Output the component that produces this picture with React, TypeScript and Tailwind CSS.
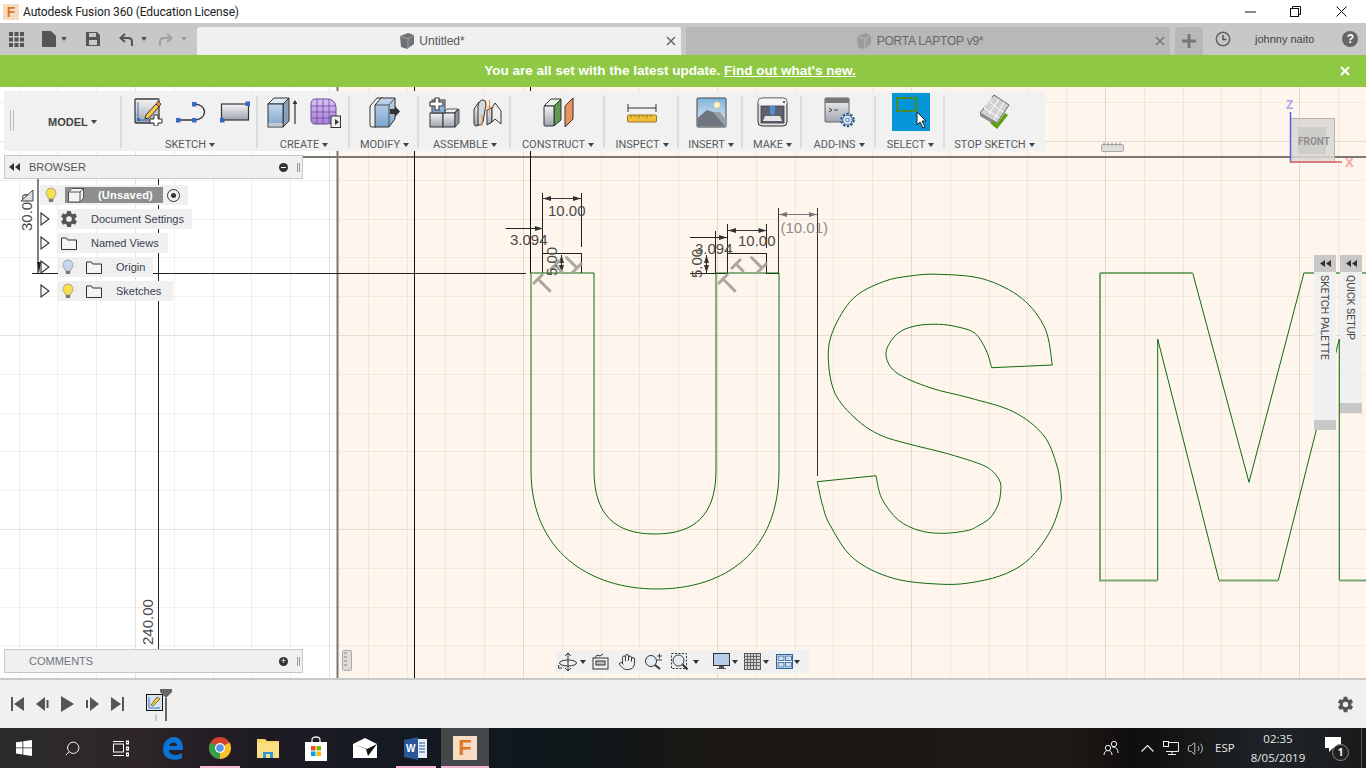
import { Hand, Search, Volume2 } from 'lucide-react'
import { IoSettingsSharp } from 'react-icons/io5'

const gridX = Array.from({ length: 36 }, (_, i) => i - 23)
const gridY = Array.from({ length: 17 }, (_, i) => i - 6)
const snap = (v: number) => Math.round(v) + 0.5

const sPoints: [number, number][] = [
    [991.7, 367.7], [986, 350], [975, 333.3], [958, 327], [938.3, 324.3], [915, 326], [896.7, 334.3], [886, 353.3], [896, 372.3],
    [930, 387.7], [970, 398], [1013.3, 411.7], [1043.3, 435], [1056.7, 465], [1061, 491.7], [1060, 505], [1050, 531.7], [1030, 558.3], [1006.7, 573.3],
    [976.7, 581.7], [943.3, 584.3], [893.3, 578.3], [853.3, 558.3], [830, 525], [822.5, 505], [817.3, 481.7],
]
const sPoints2: [number, number][] = [
    [876, 475.7], [881.7, 498.3], [898.3, 520], [920, 530.7], [943.3, 533.3], [966.7, 530.7], [976.7, 526.7], [990, 518], [998, 505], [1000.7, 491.7],
    [1000, 481.7], [993, 471.7], [980, 464], [945, 453], [910, 444.3], [880, 435], [856, 419], [835, 393.3], [828.3, 358.3], [833.3, 330],
    [853.3, 298.3], [883.3, 281.7], [910, 276], [938.3, 274.3], [983.3, 279], [1021.7, 298.3], [1045, 328.3], [1052.3, 365],
]

const smooth = (p: [number, number][]) => {
    let d = `M${p[0][0]} ${p[0][1]}`
    for (let i = 0; i < p.length - 1; i++) {
        const a = p[Math.max(i - 1, 0)]
        const b = p[i]
        const c = p[i + 1]
        const e = p[Math.min(i + 2, p.length - 1)]
        d += ` C${b[0] + (c[0] - a[0]) / 6} ${b[1] + (c[1] - a[1]) / 6} ${c[0] - (e[0] - b[0]) / 6} ${c[1] - (e[1] - b[1]) / 6} ${c[0]} ${c[1]}`
    }
    return d
}

const Caret = ({ className = 'border-t-[#444]' }: { className?: string }) => (
    <span className={`inline-block w-0 h-0 border-x-[3.5px] border-x-transparent border-t-[4px] ${className}`}></span>
)

const Gradients = () => (
    <svg className="absolute w-0 h-0">
        <defs>
            <linearGradient id="gBlue" x1="0" y1="0" x2="0" y2="1">
                <stop offset="0" stopColor="#c3d7ec" />
                <stop offset="1" stopColor="#7da3cd" />
            </linearGradient>
            <linearGradient id="gGray" x1="0" y1="0" x2="0" y2="1">
                <stop offset="0" stopColor="#f5f5f6" />
                <stop offset="1" stopColor="#9ea4ae" />
            </linearGradient>
            <linearGradient id="gPurple" x1="0" y1="0" x2="0" y2="1">
                <stop offset="0" stopColor="#d9c3f2" />
                <stop offset="1" stopColor="#a87fdc" />
            </linearGradient>
            <linearGradient id="gSky" x1="0" y1="0" x2="0" y2="1">
                <stop offset="0" stopColor="#7fb4de" />
                <stop offset="1" stopColor="#e8f0f5" />
            </linearGradient>
        </defs>
    </svg>
)

const SketchIcon = () => (
    <svg width="29" height="28" viewBox="0 0 29 28">
        <rect x="1" y="1" width="24" height="24" rx="1" fill="url(#gGray)" stroke="#3c3c3c" strokeWidth="1.3" />
        <path d="M4 4V22H22" fill="none" stroke="#3f6fc0" strokeWidth="1" />
        <rect x="3" y="20" width="3" height="3" fill="#3568c8" />
        <path d="M12 17l-1 4 4-1 10-11-3-3z" fill="#f6c945" stroke="#333" strokeWidth="1" />
        <path d="M22 6l2-3 3 3-2 3z" fill="#e8884a" stroke="#333" strokeWidth=".8" />
        <path d="M20 17h4v4h4v4h-4v3h-4v-3h-4v-4h4z" fill="#fff" stroke="#333" strokeWidth="1" />
    </svg>
)

const ArcIcon = () => (
    <svg width="32" height="24" viewBox="0 0 32 24">
        <path d="M3 20H19M19 4C33 4 33 20 19 20" fill="none" stroke="#3a3a3a" strokeWidth="1.4" />
        <rect x="1" y="18" width="4.5" height="4.5" fill="#3568c8" />
        <rect x="17" y="18" width="4.5" height="4.5" fill="#3568c8" />
        <rect x="17" y="2" width="4.5" height="4.5" fill="#3568c8" />
    </svg>
)

const RectIcon = () => (
    <svg width="32" height="24" viewBox="0 0 32 24">
        <rect x="2.5" y="4" width="27" height="16" fill="url(#gGray)" stroke="#333" strokeWidth="1.2" />
        <rect x="26.5" y="1.5" width="4.5" height="4.5" fill="#3568c8" />
        <rect x="1" y="18" width="4.5" height="4.5" fill="#3568c8" />
    </svg>
)

const ExtrudeIcon = () => (
    <svg width="30" height="31" viewBox="0 0 30 31">
        <path d="M1 7L7 1H22L16 7z" fill="#dfe9f3" stroke="#333" />
        <path d="M16 7L22 1V24L16 30z" fill="#8aa0b8" stroke="#333" />
        <rect x="1" y="7" width="15" height="23" fill="url(#gBlue)" stroke="#333" />
        <rect x="1.5" y="26" width="14" height="3.5" fill="#c4c8cc" />
        <path d="M28 4V27" stroke="#333" strokeWidth="1.2" />
        <path d="M25.5 7L28 3l2.5 4z" fill="#333" />
    </svg>
)

const MeshIcon = () => (
    <svg width="31" height="31" viewBox="0 0 31 31">
        <path d="M5 2H17Q25 2 26 10V19Q25 27 17 27H5Q1 27 1 22V8Q1 2 5 2z" fill="url(#gPurple)" stroke="#6a4a9a" />
        <path d="M1 9H25M1 15H26M1 21H25M7 2V27M13 2V27M19 2V27" stroke="#6a4a9a" strokeWidth=".8" />
        <rect x="21" y="19" width="9.5" height="11.5" fill="#eee" stroke="#333" />
        <path d="M22 25h3v-3l4 3-4 3v-3" fill="#333" />
    </svg>
)

const PressPullIcon = () => (
    <svg width="32" height="31" viewBox="0 0 32 31">
        <path d="M1 9L8 1H14L7 9V30H3Q1 30 1 28z" fill="#f2f2f2" stroke="#333" />
        <path d="M6 8L12 1H26V22L20 30H6z" fill="url(#gBlue)" stroke="#333" />
        <path d="M20 30V8H6M20 8L26 1" fill="none" stroke="#333" strokeWidth=".8" />
        <path d="M21 12h5V9l5 5.500-5 5.500v-3h-5z" fill="#333" />
    </svg>
)

const NewComponentIcon = () => (
    <svg width="31" height="31" viewBox="0 0 31 31">
        <rect x="1" y="16" width="13" height="14" fill="url(#gGray)" stroke="#333" />
        <path d="M14 16h11l4-4H18z" fill="#eceff2" stroke="#333" strokeWidth=".8" />
        <rect x="14" y="16" width="12" height="14" fill="url(#gGray)" stroke="#333" />
        <path d="M26 16l4-4V26l-4 4z" fill="#8f959e" stroke="#333" strokeWidth=".8" />
        <rect x="3" y="3" width="13" height="13" fill="url(#gBlue)" stroke="#333" />
        <path d="M6 1h4v4h4v4h-4v4H6V9H1V5h5z" fill="#fff" stroke="#333" strokeWidth="1.1" />
    </svg>
)

const JointIcon = () => (
    <svg width="29" height="29" viewBox="0 0 29 29">
        <path d="M1 11L6 4V27L3 28Q1 28 1 25z" fill="url(#gGray)" stroke="#333" />
        <path d="M5 8Q6 2 10 2Q13 2 13 6L10 24Q8 28 5 27z" fill="#d4d7db" stroke="#333" />
        <path d="M14 12L19 10V24L14 27z" fill="url(#gGray)" stroke="#333" />
        <path d="M19 10L22 5L28 13V26L22 21L19 24z" fill="#f0f0f0" stroke="#333" />
        <path d="M16.500 2V15M9 17V28" stroke="#e8842c" strokeWidth="1" />
        <path d="M12 9H21" stroke="#e8842c" strokeWidth=".8" />
    </svg>
)

const ConstructIcon = () => (
    <svg width="31" height="31" viewBox="0 0 31 31">
        <path d="M1 9L8 2H18L11 9z" fill="#eef0ee" stroke="#333" />
        <path d="M11 9L18 2V23L11 29z" fill="#5f9950" stroke="#333" />
        <rect x="1" y="9" width="10" height="20" rx="1" fill="url(#gGray)" stroke="#333" />
        <path d="M22 9L30 1V22L22 30z" fill="#e9935d" stroke="#333" />
    </svg>
)

const MeasureIcon = () => (
    <svg width="30" height="22" viewBox="0 0 30 22">
        <path d="M1 7H29" stroke="#333" />
        <path d="M1 3V11M29 3V11" stroke="#333" />
        <rect x="0.500" y="14" width="29" height="7" rx="1" fill="#f2bd3a" stroke="#9b7a20" />
        <path d="M4 14v3M8 14v2M12 14v3M16 14v2M20 14v3M24 14v2" stroke="#8c6d17" strokeWidth=".8" />
    </svg>
)

const PictureIcon = () => (
    <svg width="31" height="31" viewBox="0 0 31 31">
        <rect x="1" y="1" width="29" height="29" rx="1" fill="url(#gSky)" stroke="#444" />
        <circle cx="21" cy="8" r="3" fill="#fff7c8" stroke="#f1d98a" />
        <path d="M1.500 29.500V21L11 13L20 16L29.500 29.500z" fill="#6f7680" />
        <path d="M17 15L24 15L29.500 22V29.500z" fill="#98a0aa" />
    </svg>
)

const PrinterIcon = () => (
    <svg width="31" height="30" viewBox="0 0 31 30">
        <rect x="1" y="1" width="29" height="28" rx="4" fill="#dfdfdf" stroke="#333" />
        <rect x="1.500" y="1.500" width="28" height="7" rx="3" fill="#f4f4f4" />
        <rect x="4" y="9" width="23" height="17" fill="#5c636c" stroke="#333" strokeWidth=".7" />
        <rect x="26" y="4" width="2" height="2" fill="#0c8a2a" />
        <path d="M13 9h5v7l-2.500 3-2.500-3z" fill="#4d8ed8" />
        <path d="M6 24l2-5h15l2 5z" fill="#e6e6e6" />
    </svg>
)

const AddInsIcon = () => (
    <svg width="31" height="31" viewBox="0 0 31 31">
        <rect x="1" y="1" width="24" height="24" rx="1" fill="url(#gGray)" stroke="#666" />
        <rect x="1" y="1" width="24" height="5" fill="#777" />
        <path d="M5 11l3 2-3 2M10 13h4" fill="none" stroke="#333" strokeWidth=".9" />
        <circle cx="23.500" cy="23" r="6.200" fill="#f1f1f1" stroke="#28558f" strokeWidth="2" strokeDasharray="2.400 1.500" />
        <circle cx="23.500" cy="23" r="4.800" fill="#dbe7f5" stroke="#28558f" strokeWidth=".9" />
        <circle cx="23.500" cy="23" r="1.800" fill="#f1f1f1" stroke="#28558f" strokeWidth=".8" />
    </svg>
)

const StopSketchIcon = () => (
    <svg width="31" height="36" viewBox="0 0 31 36">
        <path d="M1 19L15 1L30 11L18 29z" fill="#cfd1d2" stroke="#666" />
        <path d="M5 14L20 24M10 7.500L24 18M13 3.500L5 14M20 5L10 20M25 8L15 26" stroke="#fff" strokeWidth="1" />
        <path d="M1 19L18 29V32L1 22z" fill="#8a8d90" />
        <path d="M14 27l4 3 8-11 3 2-11 14-7-6z" fill="#5d9f12" />
    </svg>
)

const SelectIcon = () => (
    <div className="w-[38px] h-[38px] bg-[#0696d7] relative">
        <div className="absolute left-[4px] top-[4px] w-[21px] h-[15px] border-2 border-[#4a8a2a]"></div>
        <svg className="absolute left-[24px] top-[18px]" width="12" height="18" viewBox="0 0 12 18">
            <path d="M1 1V14L4 11L7 17L9 16L6 10H10z" fill="#fff" stroke="#222" strokeWidth="1" />
        </svg>
    </div>
)

const Section = ({ label, width, children, last, row = 'gap-[13px]' }: { label: string; width: string; children: React.ReactNode; last?: boolean; row?: string }) => (
    <div className={`flex flex-col items-center relative ${width}`}>
        <div className={`h-[42px] flex items-center justify-center ${row}`}>{children}</div>
        <div className="flex items-center gap-[3px] text-[11px] leading-none text-[#5a5a5a] font-['Roboto',sans-serif] mt-[6px]">
            {label}
            <Caret />
        </div>
        {!last && <div className="absolute right-0 top-[5px] bottom-[3px] w-[2px] bg-[#dcdcdc]"></div>}
    </div>
)

const Toolbar = () => (
    <div className="absolute left-[4px] top-[4px] w-[1041px] h-[60px] bg-[#f1f1f1] flex">
        <div className="w-[118px] flex items-center relative">
            <div className="absolute left-[6px] top-[19px] w-[4px] h-[21px] border-x border-[#bbb]"></div>
            <div className="ml-[44px] mt-[2px] flex items-center gap-[3px] text-[11px] font-bold text-[#444]">
                MODEL
                <Caret />
            </div>
            <div className="absolute right-0 top-[5px] bottom-[3px] w-[2px] bg-[#dcdcdc]"></div>
        </div>
        <Section label="SKETCH" width="w-[136px]" row="gap-[12px] pl-[5px]"><SketchIcon /><ArcIcon /><RectIcon /></Section>
        <Section label="CREATE" width="w-[92px]"><ExtrudeIcon /><MeshIcon /></Section>
        <Section label="MODIFY" width="w-[69px]"><PressPullIcon /></Section>
        <Section label="ASSEMBLE" width="w-[92px]"><NewComponentIcon /><JointIcon /></Section>
        <Section label="CONSTRUCT" width="w-[94px]"><ConstructIcon /></Section>
        <Section label="INSPECT" width="w-[74px]"><MeasureIcon /></Section>
        <Section label="INSERT" width="w-[64px]"><PictureIcon /></Section>
        <Section label="MAKE" width="w-[59px]"><PrinterIcon /></Section>
        <Section label="ADD-INS" width="w-[74px]"><AddInsIcon /></Section>
        <Section label="SELECT" width="w-[69px]"><SelectIcon /></Section>
        <Section label="STOP SKETCH" width="w-[99px]" last><StopSketchIcon /></Section>
    </div>
)

const Bulb = ({ color = '#f7e04b' }: { color?: string }) => (
    <svg width="12" height="16" viewBox="0 0 12 16">
        <path d="M6 1a5 5 0 0 1 3 9l-.5 2h-5L3 10A5 5 0 0 1 6 1z" fill={color} stroke="#9a9a8a" strokeWidth=".8" />
        <rect x="3.700" y="12" width="4.600" height="3" rx="1" fill="#777" />
    </svg>
)

const Folder = () => (
    <svg width="16" height="13" viewBox="0 0 16 13">
        <path d="M.5 12.500V1h5l1 2h9v9.500z" fill="#f3f4f6" stroke="#333" />
    </svg>
)

const Expander = () => (
    <svg width="10" height="14" viewBox="0 0 10 14" className="shrink-0">
        <path d="M1 1L9 7L1 13z" fill="#fafafa" stroke="#333" strokeWidth="1.100" />
    </svg>
)

const TreeRow = ({ children, width }: { children: React.ReactNode; width: string }) => (
    <div className="flex items-center h-[20px] gap-[8px]">
        <Expander />
        <div className={`h-[20px] bg-[#f0f0f0] flex items-center text-[11px] text-[#3b4250] ${width}`}>{children}</div>
    </div>
)

const Browser = () => (
    <>
        <div className="absolute left-[4px] top-[68px] w-[299px] h-[24px] bg-[#f0f0f0] border border-[#c8c8c8] flex items-center text-[12px] text-[#555]">
            <svg width="12" height="8" viewBox="0 0 12 8" className="ml-[4px]"><path d="M5 0V8L0 4zM11 0V8L6 4z" fill="#333" /></svg>
            <span className="ml-[8px] text-[11px]">BROWSER</span>
            <div className="ml-auto mr-[9px] w-[9px] h-[9px] rounded-full bg-[#333] flex items-center justify-center"><div className="w-[5px] h-[1px] bg-white"></div></div>
            <div className="mr-[2px] w-[3px] h-[9px] border-x border-[#999]"></div>
        </div>
        <div className="absolute left-[40px] top-[98px] flex flex-col gap-[4px]">
            <div className="w-[148px] h-[20px] bg-[#f0f0f0] flex items-center pl-[5px]">
                <Bulb />
                <div className="ml-[8px] w-[98px] h-[16px] bg-[#8e8e8e] flex items-center pl-[3px]">
                    <svg width="16" height="15" viewBox="0 0 16 15"><path d="M.5 14V4L4 .5H15.500V10L12 14z" fill="#f2f2f2" stroke="#555" /><path d="M.5 4H12V14M12 4L15.500 .5" fill="none" stroke="#555" /></svg>
                    <span className="ml-[14px] text-[11px] font-bold text-white tracking-[0.2px]">(Unsaved)</span>
                </div>
                <div className="ml-[4px] w-[13px] h-[13px] rounded-full border border-[#333] flex items-center justify-center"><div className="w-[5px] h-[5px] rounded-full bg-[#333]"></div></div>
            </div>
            <TreeRow width="w-[134px]">
                <IoSettingsSharp className="ml-[2px] text-[#555]" size={18} />
                <span className="ml-[13px]">Document Settings</span>
            </TreeRow>
            <TreeRow width="w-[110px]">
                <span className="ml-[3px] flex"><Folder /></span>
                <span className="ml-[14px]">Named Views</span>
            </TreeRow>
            <TreeRow width="w-[95px]">
                <span className="ml-[4px] flex"><Bulb color="#c4d4f2" /></span>
                <span className="ml-[12px] flex"><Folder /></span>
                <span className="ml-[14px]">Origin</span>
            </TreeRow>
            <TreeRow width="w-[115px]">
                <span className="ml-[4px] flex"><Bulb /></span>
                <span className="ml-[12px] flex"><Folder /></span>
                <span className="ml-[14px]">Sketches</span>
            </TreeRow>
        </div>
        <div className="absolute left-[4px] top-[562px] w-[299px] h-[24px] bg-[#f0f0f0] border border-[#c8c8c8] flex items-center text-[11px] text-[#6f7680]">
            <span className="ml-[24px]">COMMENTS</span>
            <div className="ml-auto mr-[9px] w-[9px] h-[9px] rounded-full bg-[#333] flex items-center justify-center text-white text-[9px] leading-none">+</div>
            <div className="mr-[2px] w-[3px] h-[9px] border-x border-[#999]"></div>
        </div>
    </>
)

const PerpGlyph = ({ x, y, r = -45, len = 18 }: { x: number; y: number; r?: number; len?: number }) => (
    <g transform={`translate(${x} ${y}) rotate(${r})`} stroke="#aaa6a0" strokeWidth="3" fill="none">
        <path d={`M-7 0H7M0 0V${len}`} />
    </g>
)

const Arrow = ({ x, y, dir }: { x: number; y: number; dir: 'l' | 'r' | 'u' | 'd' }) => {
    const d = { l: `M${x} ${y}l8 -2.500v5z`, r: `M${x} ${y}l-8 -2.500v5z`, u: `M${x} ${y}l-2.500 8h5z`, d: `M${x} ${y}l-2.500 -8h5z` }[dir]
    return <path d={d} fill="#333" />
}

const dimText = { fontSize: 15, fill: '#4a4a4a' }

const SketchCanvas = () => (
    <svg className="absolute inset-0" width="1366" height="591" viewBox="0 87 1366 591">
        <rect x="0" y="87" width="337" height="591" fill="#fff" />
        <rect x="337" y="87" width="1029" height="591" fill="#fef6ec" />
        {gridX.map((k) => (
            <line key={k} x1={snap(911 + k * 38.8)} y1="87" x2={snap(911 + k * 38.8)} y2="678" stroke="#6b5a40" strokeOpacity={k % 5 === 0 ? 0.18 : 0.09} />
        ))}
        {gridY.map((k) => (
            <line key={k} x1="0" y1={snap(335 + k * 38.8)} x2="1366" y2={snap(335 + k * 38.8)} stroke="#6b5a40" strokeOpacity={k % 5 === 0 ? 0.16 : 0.08} />
        ))}
        <path d="M337.500 87V678" stroke="#7b7770" strokeWidth="2" />
        <path d="M303 157H1366" stroke="#7d7870" strokeWidth="2" />
        <path d="M414.500 87V678M530.500 87V273" stroke="#111" strokeWidth="1" />
        <path d="M158.500 179V650" stroke="#222" strokeWidth="1" />
        <path d="M38 179V273" stroke="#555" strokeWidth="1.500" />
        <path d="M32 273.500H526M690 273.500H728M766 273.500H779" stroke="#222" strokeWidth="1" />

        <path d="M542.500 193V273M581.500 193V247M581.500 253V273M542.500 253.500H581.500M505.500 228.500H542.500" stroke="#222" fill="none" />
        <path d="M542.500 198.500H581.500" stroke="#333" />
        <Arrow x={543} y={198.500} dir="l" /><Arrow x={581} y={198.500} dir="r" />
        <Arrow x={543} y={228.500} dir="r" />
        <path d="M561.500 255V273" stroke="#222" />
        <Arrow x={561.500} y={255} dir="u" /><Arrow x={561.500} y={273} dir="d" />
        <path d="M715.500 231V273M727.500 224V273M766.500 224V248M766.500 253V273M727.500 253.500H766.500M690 237.500H727.500" stroke="#222" fill="none" />
        <path d="M727.500 230.500H766.500" stroke="#333" />
        <Arrow x={728} y={230.500} dir="l" /><Arrow x={766.500} y={230.500} dir="r" />
        <Arrow x={727} y={237.500} dir="r" />
        <path d="M706.500 255V273" stroke="#222" />
        <Arrow x={706.500} y={255} dir="u" /><Arrow x={706.500} y={273} dir="d" />
        <path d="M778.500 208V273M817.500 208V476" stroke="#333" />
        <path d="M779 214.500H817" stroke="#777" />
        <path d="M779 214.500l8 -2.500v5zM817 214.500l-8 -2.500v5z" fill="#777" />

        <path d="M531 273V470C531 552 590 589 657 589C725 589 779 552 779 470V273H716V470C716 515 695 534 655 534C615 534 594 515 594 470V273H531" fill="none" stroke="#0e6a0e" strokeWidth="1" />
        <path d={smooth(sPoints)} fill="none" stroke="#0e6a0e" strokeWidth="1" />
        <path d={smooth(sPoints2)} fill="none" stroke="#0e6a0e" strokeWidth="1" />
        <path d="M991.700 367.700L1052.300 365M817.300 481.700L876 475.700" fill="none" stroke="#0e6a0e" strokeWidth="1" />
        <path d="M1157.700 580.300V339L1219 580.300M1278.300 580.300L1339.300 339V580.300M1192.700 273L1249 482.300L1304 272.700" fill="none" stroke="#0e6a0e" strokeWidth="1" />
        <path d="M1100 273V580.500H1157.700M1100 273H1192.700M1219 580.500H1278.300M1339.300 580.500H1366M1304 273H1366" fill="none" stroke="#7aa873" strokeWidth="2" />

        <PerpGlyph x={538} y={279} /><PerpGlyph x={723} y={279} />
        <PerpGlyph x={577} y={268} r={135} len={16} /><PerpGlyph x={762} y={268} r={135} len={16} />
        <PerpGlyph x={736} y={264} len={11} />
        <PerpGlyph x={555} y={265} len={11} />

        <text x="548" y="216" {...dimText}>10.00</text>
        <text x="510" y="245" {...dimText}>3.094</text>
        <text x="738" y="246" {...dimText}>10.00</text>
        <text x="695" y="254" {...dimText}>3.094</text>
        <text x="780.500" y="233" fontSize="15" fill="#8c8c8c">(10.01)</text>
        <text transform="translate(557 276) rotate(-90)" {...dimText}>5.00</text>
        <text transform="translate(702 278) rotate(-90)" {...dimText}>5.00</text>
        <text transform="translate(32 231) rotate(-90)" {...dimText}>30.00</text>
        <text transform="translate(153 645) rotate(-90)" {...dimText}>240.00</text>
        <path d="M21 201L33 190V201z" fill="#ddd" stroke="#444" />
        <path d="M37 262L41 262L39 273z" fill="#222" />

        <g fill="#dedcd6" stroke="#aaa">
            <rect x="1101.500" y="144.500" width="22" height="7" rx="1" />
            <rect x="342.500" y="650.500" width="9" height="20" rx="1" />
        </g>
        <path d="M1104 142.500v3M1108 142.500v3M1112 142.500v3M1116 142.500v3M1120 142.500v3M344 653h3M344 657h3M344 661h3M344 665h3" stroke="#888" />

        <rect x="1290.500" y="118.500" width="44" height="44" fill="#d9d7d3" fillOpacity="0.85" stroke="#b5b3af" />
        <rect x="1298" y="127" width="28" height="27" fill="#cfcdc9" />
        <path d="M1290.500 112V162" stroke="#5a5af0" strokeWidth="1.500" />
        <path d="M1290 162H1342" stroke="#e06060" strokeWidth="1.500" />
        <text x="1286" y="109" fontSize="12" fontWeight="bold" fill="#a5a5ef">Z</text>
        <text x="1345" y="167" fontSize="13" fontWeight="bold" fill="#f2a5a5">X</text>
        <text x="1298" y="145" fontSize="10" fontWeight="bold" fontFamily="Roboto" fill="#8f8f8f">FRONT</text>
    </svg>
)

const Palette = ({ label, left, height }: { label: string; left: string; height: string }) => (
    <div className={`absolute top-[168px] w-[22px] flex flex-col bg-[#f0f0f0] ${left} ${height}`}>
        <div className="h-[17px] bg-[#c8c8c8] flex items-center justify-center shrink-0">
            <svg width="11" height="7" viewBox="0 0 11 7"><path d="M5 0V7L0 3.500zM11 0V7L6 3.500z" fill="#333" /></svg>
        </div>
        <div className="flex-1 flex justify-center pt-[3px] pr-[2px]">
            <span className="[writing-mode:vertical-rl] text-[10.5px] leading-[12px] text-[#444] font-['Roboto',sans-serif]">{label}</span>
        </div>
        <div className="h-[10px] bg-[#c8c8c8] shrink-0"></div>
    </div>
)

const SmallCaret = () => <Caret className="border-t-[#333]" />

const NavBar = () => (
    <div className="absolute left-[556px] top-[563px] w-[253px] h-[23px] bg-[#f0f0f0] flex items-center pl-[2px]">
        <svg width="20" height="20" viewBox="0 0 20 20" fill="none" stroke="#333">
            <path d="M10 1V19M7 4l3-3 3 3M7 16l3 3 3-3" />
            <ellipse cx="10" cy="11" rx="8.500" ry="3" />
            <path d="M1 13l-1 3 4 0" />
        </svg>
        <span className="ml-[2px] flex"><SmallCaret /></span>
        <svg className="ml-[6px]" width="17" height="17" viewBox="0 0 17 17" fill="none" stroke="#333">
            <rect x="1" y="5" width="15" height="11" />
            <rect x="4" y="8" width="9" height="4" fill="#bbb" />
            <path d="M3 5l2-3 3 1 3-2" />
        </svg>
        <Hand className="ml-[9px] text-[#333]" size={18} strokeWidth={1.300} />
        <svg className="ml-[8px]" width="19" height="17" viewBox="0 0 19 17" fill="none" stroke="#333">
            <circle cx="7" cy="8" r="5.500" fill="#e6eef5" />
            <path d="M11 12l5 4" strokeWidth="2" />
            <path d="M13 3h5M15.500 .5v5M13 7h5" strokeWidth=".9" />
        </svg>
        <svg className="ml-[8px]" width="18" height="18" viewBox="0 0 18 18" fill="none" stroke="#333">
            <rect x=".5" y=".5" width="15" height="15" strokeDasharray="2 1.500" />
            <circle cx="7.500" cy="7.500" r="5.500" fill="#e6eef5" />
            <path d="M11.500 11.500l5 5" strokeWidth="2" />
        </svg>
        <span className="ml-[4px] flex"><SmallCaret /></span>
        <svg className="ml-[14px]" width="17" height="17" viewBox="0 0 17 17">
            <rect x=".5" y=".5" width="16" height="12" fill="#b4cdea" stroke="#333" />
            <path d="M6 13h5v2h2v1H4v-1h2z" fill="#555" />
        </svg>
        <span className="ml-[2px] flex"><SmallCaret /></span>
        <svg className="ml-[6px]" width="17" height="17" viewBox="0 0 17 17">
            <rect x=".5" y=".5" width="16" height="16" fill="#d4d4d4" stroke="#555" />
            <path d="M3.500 0v17M6.500 0v17M9.500 0v17M12.500 0v17M0 3.500h17M0 6.500h17M0 9.500h17M0 12.500h17" stroke="#666" />
        </svg>
        <span className="ml-[2px] flex"><SmallCaret /></span>
        <svg className="ml-[7px]" width="17" height="15" viewBox="0 0 17 15">
            <rect x=".5" y=".5" width="16" height="14" fill="#fff" stroke="#2f5f9f" />
            <rect x="2" y="2" width="6" height="4.500" fill="#d0dff0" stroke="#2f5f9f" strokeWidth=".8" />
            <rect x="9.500" y="2" width="6" height="4.500" fill="#d0dff0" stroke="#2f5f9f" strokeWidth=".8" />
            <rect x="2" y="8.500" width="6" height="4.500" fill="#d0dff0" stroke="#2f5f9f" strokeWidth=".8" />
            <rect x="9.500" y="8.500" width="6" height="4.500" fill="#d0dff0" stroke="#2f5f9f" strokeWidth=".8" />
        </svg>
        <span className="ml-[1px] flex"><SmallCaret /></span>
    </div>
)

const TitleBar = () => (
    <div className="h-[23px] bg-white flex items-center shrink-0">
        <div className="ml-[3px] w-[16px] h-[16px] bg-[#f6dcc4] flex items-center justify-center text-[#d97a1e] font-bold text-[14px] leading-none">F</div>
        <span className="ml-[4px] text-[12px] tracking-[-0.13px] text-[#222] font-['Roboto',sans-serif]">Autodesk Fusion 360 (Education License)</span>
        <svg className="ml-auto mr-[34px]" width="11" height="2" viewBox="0 0 11 2"><path d="M0 1H11" stroke="#111" /></svg>
        <svg className="mr-[35px]" width="11" height="11" viewBox="0 0 11 11" fill="none" stroke="#111"><rect x=".5" y="2.500" width="8" height="8" fill="#fff" /><path d="M2.500 2.500V.5H10.500V8.500H8.500" /></svg>
        <svg className="mr-[19px]" width="11" height="11" viewBox="0 0 11 11" stroke="#111"><path d="M.5 .5L10.500 10.500M10.500 .5L.5 10.500" /></svg>
    </div>
)

const TabCube = ({ color }: { color: string }) => (
    <svg width="16" height="16" viewBox="0 0 16 16">
        <path d="M1 3L9 0L15 2V11L8 16L2 14z" fill={color} />
        <path d="M1 3L9 6L15 2M9 6V15.500" fill="none" stroke="#eee" strokeOpacity=".4" />
    </svg>
)

const TabBar = () => (
    <div className="h-[32px] bg-[#c8c8c8] flex items-end shrink-0">
        <div className="w-[197px] h-[32px] flex items-center pl-[9px] relative">
            <svg width="15" height="15" viewBox="0 0 15 15" fill="#555">
                <rect width="4" height="4" /><rect x="5.500" width="4" height="4" /><rect x="11" width="4" height="4" />
                <rect y="5.500" width="4" height="4" /><rect x="5.500" y="5.500" width="4" height="4" /><rect x="11" y="5.500" width="4" height="4" />
                <rect y="11" width="4" height="4" /><rect x="5.500" y="11" width="4" height="4" /><rect x="11" y="11" width="4" height="4" />
            </svg>
            <svg className="ml-[18px]" width="14" height="16" viewBox="0 0 14 16" fill="#555"><path d="M0 0H9L14 5V16H0z" /></svg>
            <span className="ml-[5px] flex"><Caret className="border-t-[#555]" /></span>
            <svg className="ml-[19px]" width="14" height="14" viewBox="0 0 14 14" fill="#555"><path d="M0 0H11L14 3V14H0z" /><rect x="3" y="1" width="7" height="4" fill="#c8c8c8" /><rect x="3" y="8" width="8" height="5" fill="#c8c8c8" /></svg>
            <svg className="ml-[19px]" width="14" height="13" viewBox="0 0 14 13" fill="none" stroke="#555" strokeWidth="2"><path d="M6 1L1.500 5L6 9M2 5H9Q13 5 13 9V13" /></svg>
            <span className="ml-[8px] flex"><Caret className="border-t-[#555]" /></span>
            <svg className="ml-[12px]" width="14" height="13" viewBox="0 0 14 13" fill="none" stroke="#a0a0a0" strokeWidth="2"><path d="M8 1L12.500 5L8 9M12 5H5Q1 5 1 9V13" /></svg>
            <span className="ml-[8px] flex"><Caret className="border-t-[#a0a0a0]" /></span>
        </div>
        <div className="w-[484px] h-[28px] bg-[#f0f0f0] rounded-t-[3px] flex items-center justify-center relative">
            <div className="flex items-center gap-[4px] mr-[14px] text-[12px] text-[#555]">
                <TabCube color="#6f7274" />
                Untitled*
            </div>
            <svg className="absolute right-[5px] top-[9px]" width="10" height="10" viewBox="0 0 10 10" stroke="#666" strokeWidth="1.500"><path d="M1 1L9 9M9 1L1 9" /></svg>
        </div>
        <div className="ml-[5px] w-[484px] h-[28px] bg-[#b8b8b8] rounded-t-[3px] flex items-center justify-center relative">
            <div className="flex items-center gap-[5px] mr-[17px] text-[12px] tracking-[-0.25px] text-[#666]">
                <TabCube color="#999b9c" />
                PORTA LAPTOP v9*
            </div>
            <svg className="absolute right-[5px] top-[9px]" width="10" height="10" viewBox="0 0 10 10" stroke="#777" strokeWidth="1.500"><path d="M1 1L9 9M9 1L1 9" /></svg>
        </div>
        <div className="ml-[5px] w-[28px] h-[28px] bg-[#b8b8b8] rounded-t-[3px] flex items-center justify-center">
            <svg width="14" height="14" viewBox="0 0 14 14" fill="#777"><path d="M5.500 0h3v5.500H14v3H8.500V14h-3V8.500H0v-3h5.500z" /></svg>
        </div>
        <div className="h-[32px] flex-1 flex items-center relative">
            <svg className="ml-[12px]" width="16" height="16" viewBox="0 0 16 16"><circle cx="8" cy="8" r="7.500" fill="#666" /><circle cx="8" cy="8" r="5.500" fill="#c8c8c8" stroke="#fff" strokeOpacity=".4" /><path d="M8 4V8.500H11.500" stroke="#555" strokeWidth="1.500" fill="none" /></svg>
            <span className="ml-[24px] text-[11px] text-[#444]">johnny naito</span>
            <div className="ml-[28px] w-[16px] h-[16px] rounded-full bg-[#666] text-white text-[12px] font-bold leading-[16px] text-center">?</div>
        </div>
    </div>
)

const Banner = () => (
    <div className="h-[32px] bg-[#8fc843] flex items-center justify-center pr-[26px] relative shrink-0 text-white text-[13.5px] font-bold">
        <span>You are all set with the latest update.&nbsp;</span>
        <span className="underline">Find out what&apos;s new.</span>
        <svg className="absolute right-[16px] top-[11px]" width="10" height="10" viewBox="0 0 10 10" stroke="#fff" strokeWidth="2"><path d="M1 1L9 9M9 1L1 9" /></svg>
    </div>
)

const Timeline = () => (
    <div className="h-[50px] bg-[#f0f0f0] border-t-2 border-[#c9c9c9] shrink-0 flex items-center relative">
        <div className="flex items-center ml-[11px] gap-[12px]">
            <svg width="13" height="14" viewBox="0 0 13 14" fill="#555"><rect width="2" height="14" /><path d="M13 0V14L3 7z" /></svg>
            <svg width="13" height="14" viewBox="0 0 13 14" fill="#555"><path d="M9 0V14L0 7z" /><rect x="10.500" y="3" width="2" height="8" /></svg>
            <svg width="13" height="16" viewBox="0 0 13 16" fill="#555"><path d="M0 0V16L13 8z" /></svg>
            <svg width="13" height="14" viewBox="0 0 13 14" fill="#555"><rect y="3" width="2" height="8" /><path d="M4 0V14L13 7z" /></svg>
            <svg width="13" height="14" viewBox="0 0 13 14" fill="#555"><path d="M0 0V14L10 7z" /><rect x="11" width="2" height="14" /></svg>
        </div>
        <svg className="ml-[22px] mb-[4px]" width="17" height="17" viewBox="0 0 17 17">
            <rect x=".5" y=".5" width="16" height="16" fill="#d6e4f2" stroke="#111" />
            <path d="M3 3V14H14" fill="none" stroke="#3a6fc0" />
            <path d="M5 11l6-8 3 2-7 7z" fill="#f5c93c" stroke="#444" strokeWidth=".7" />
        </svg>
        <div className="absolute left-[155px] top-[34px] w-[2px] h-[7px] bg-[#ccc]"></div>
        <div className="absolute left-[160px] top-[9px] flex flex-col items-center">
            <svg width="12" height="9" viewBox="0 0 12 9" fill="#666"><path d="M0 0H12V3L6 9L0 3z" /></svg>
            <div className="w-[2px] h-[23px] bg-[#666]"></div>
        </div>
        <IoSettingsSharp className="ml-auto mr-[12px] text-[#555]" size={17} />
    </div>
)

const Taskbar = () => (
    <div className="h-[40px] shrink-0 flex items-center relative bg-[linear-gradient(90deg,#2b2b2d_0%,#2e2628_10%,#221c24_16%,#141a22_30%,#0f171b_42%,#1a1712_52%,#1d1915_78%,#100e0e_83%,#1f2428_93%,#1a1a1c_100%)]">
        <div className="w-[48px] flex justify-center">
            <svg width="16" height="16" viewBox="0 0 16 16" fill="#fff"><path d="M0 2.300L6.500 1.400V7.500H0zM7.300 1.300L16 0V7.500H7.300zM0 8.300H6.500V14.500L0 13.600zM7.300 8.300H16V16L7.300 14.700z" /></svg>
        </div>
        <div className="w-[48px] flex justify-center"><Search className="text-white -scale-x-100" size={17} strokeWidth={1.300} /></div>
        <div className="w-[48px] flex justify-center">
            <svg width="17" height="17" viewBox="0 0 17 17" fill="none" stroke="#fff"><rect x="1.500" y="4" width="10" height="8" /><path d="M1 1.500H12M1 15.500H12" /><rect x="14.500" y="1" width="2" height="3" /><rect x="14.500" y="7" width="2" height="3" /><rect x="14.500" y="13" width="2" height="3" /></svg>
        </div>
        <div className="ml-[4px] w-[48px] flex justify-center">
            <svg width="21" height="23" viewBox="0 0 21 23">
                <path d="M1 13C1 5 6 0 12 0C18 0 21 5 21 13H7C7 18 14 20 20 16V21C12 25 1 22 1 13zM7 9H15C15 5 9 4 7 9z" fill="#0b74d6" />
            </svg>
        </div>
        <div className="w-[48px] flex justify-center">
            <svg width="22" height="22" viewBox="0 0 22 22">
                <circle cx="11" cy="11" r="11" fill="#d6402f" />
                <path d="M11 11L1.500 5.500A11 11 0 0 0 11 22z" fill="#35a04a" />
                <path d="M11 11V22A11 11 0 0 0 20.500 5.500z" fill="#f6c42c" />
                <circle cx="11" cy="11" r="5" fill="#fff" />
                <circle cx="11" cy="11" r="3.800" fill="#5a90e8" />
            </svg>
        </div>
        <div className="w-[48px] flex justify-center">
            <svg width="22" height="20" viewBox="0 0 22 20">
                <path d="M0 1H8L10 3H22V20H0z" fill="#f6d46a" />
                <rect y="5" width="22" height="15" fill="#f9de82" />
                <path d="M6 20V14H16V20H13V16H9V20z" fill="#2a9ad8" />
            </svg>
        </div>
        <div className="w-[48px] flex justify-center">
            <svg width="22" height="25" viewBox="0 0 22 25">
                <path d="M7 8V4Q7 1 11 1Q15 1 15 4V8" fill="none" stroke="#eee" strokeWidth="1.300" />
                <rect y="6" width="22" height="19" fill="#fff" />
                <rect x="6" y="10" width="4.500" height="4.500" fill="#f05022" />
                <rect x="11.500" y="10" width="4.500" height="4.500" fill="#7fba00" />
                <rect x="6" y="15.500" width="4.500" height="4.500" fill="#00a4ef" />
                <rect x="11.500" y="15.500" width="4.500" height="4.500" fill="#ffb900" />
            </svg>
        </div>
        <div className="w-[50px] flex justify-center">
            <svg width="24" height="20" viewBox="0 0 24 20">
                <path d="M0 6L12 0L24 6V20H0z" fill="#fff" />
                <path d="M0 6L14 11L24 6L15 18L13 11z" fill="#111" />
            </svg>
        </div>
        <div className="w-[51px] flex justify-center">
            <svg width="23" height="23" viewBox="0 0 23 23">
                <rect x="6" y="2" width="17" height="19" fill="#e8eef8" />
                <path d="M15 6h6M15 9h6M15 12h6M15 15h6" stroke="#2b579a" />
                <path d="M0 3L14 0V23L0 20z" fill="#2b579a" />
                <text x="2" y="15" fontSize="10" fontWeight="bold" fill="#fff">W</text>
            </svg>
        </div>
        <div className="w-[48px] h-[40px] bg-[#44484a] flex justify-center items-center">
            <div className="w-[24px] h-[24px] bg-[#f6dcc4] flex items-center justify-center text-[#d97a1e] font-bold text-[22px] leading-none">F</div>
        </div>
        <div className="absolute left-[200px] bottom-0 w-[40px] h-[2px] bg-[#f5b5d5]"></div>
        <div className="absolute left-[396px] bottom-0 w-[40px] h-[2px] bg-[#f5b5d5]"></div>
        <div className="absolute left-[441px] bottom-0 w-[48px] h-[2px] bg-[#f5b5d5]"></div>

        <div className="ml-auto flex items-center text-[#e6e6e6] text-[11.5px] font-['Open_Sans',sans-serif]">
            <svg width="16" height="16" viewBox="0 0 16 16" fill="none" stroke="#eee"><circle cx="11" cy="4" r="2.700" /><circle cx="5" cy="8" r="2.700" /><path d="M1 15c0-6 8-6 8 0M9 7c3 0 6 1 6 6" /></svg>
            <svg className="ml-[22px]" width="13" height="8" viewBox="0 0 13 8" fill="none" stroke="#eee" strokeWidth="1.200"><path d="M.5 7.500L6.500 1.500L12.500 7.500" /></svg>
            <svg className="ml-[9px]" width="16" height="14" viewBox="0 0 16 14" fill="none" stroke="#eee"><path d="M3 1.500H15.500V10.500H3M9 10.500V13M5 13.500H13" /><rect x=".5" y=".5" width="5" height="5" fill="#111" /></svg>
            <Volume2 className="ml-[8px] text-[#eee]" size={17} strokeWidth={1.100} />
            <span className="ml-[11px] w-[25px]">ESP</span>
            <div className="ml-[11px] w-[54px] mb-[1px] flex flex-col items-center leading-[19px] whitespace-nowrap"><span>02:35</span><span>8/05/2019</span></div>
            <div className="ml-[20px] w-[24px] h-[24px] relative">
                <svg className="absolute left-0 top-[1px]" width="16" height="15" viewBox="0 0 16 15" fill="#fff"><path d="M0 0H16V11H8L4 15V11H0z" /></svg>
                <div className="absolute left-[7px] top-[8px] w-[17px] h-[17px] rounded-full border border-[#888] bg-[#222] text-[10px] font-bold leading-[15px] text-center text-white">1</div>
            </div>
            <div className="ml-[12px] w-[1px] h-[40px] bg-[#555] mr-[4px]"></div>
        </div>
    </div>
)

const App = () => {
    return (
        <div className="w-[1366px] h-[768px] flex flex-col overflow-hidden font-['Liberation_Sans',Arial,sans-serif]">
            <Gradients />
            <TitleBar />
            <TabBar />
            <Banner />
            <div className="flex-1 relative overflow-hidden">
                <SketchCanvas />
                <Toolbar />
                <Browser />
                <NavBar />
                <Palette label="SKETCH PALETTE" left="left-[1314px]" height="h-[175px]" />
                <Palette label="QUICK SETUP" left="left-[1340px]" height="h-[158px]" />
            </div>
            <Timeline />
            <Taskbar />
        </div>
    )
}

export default App
